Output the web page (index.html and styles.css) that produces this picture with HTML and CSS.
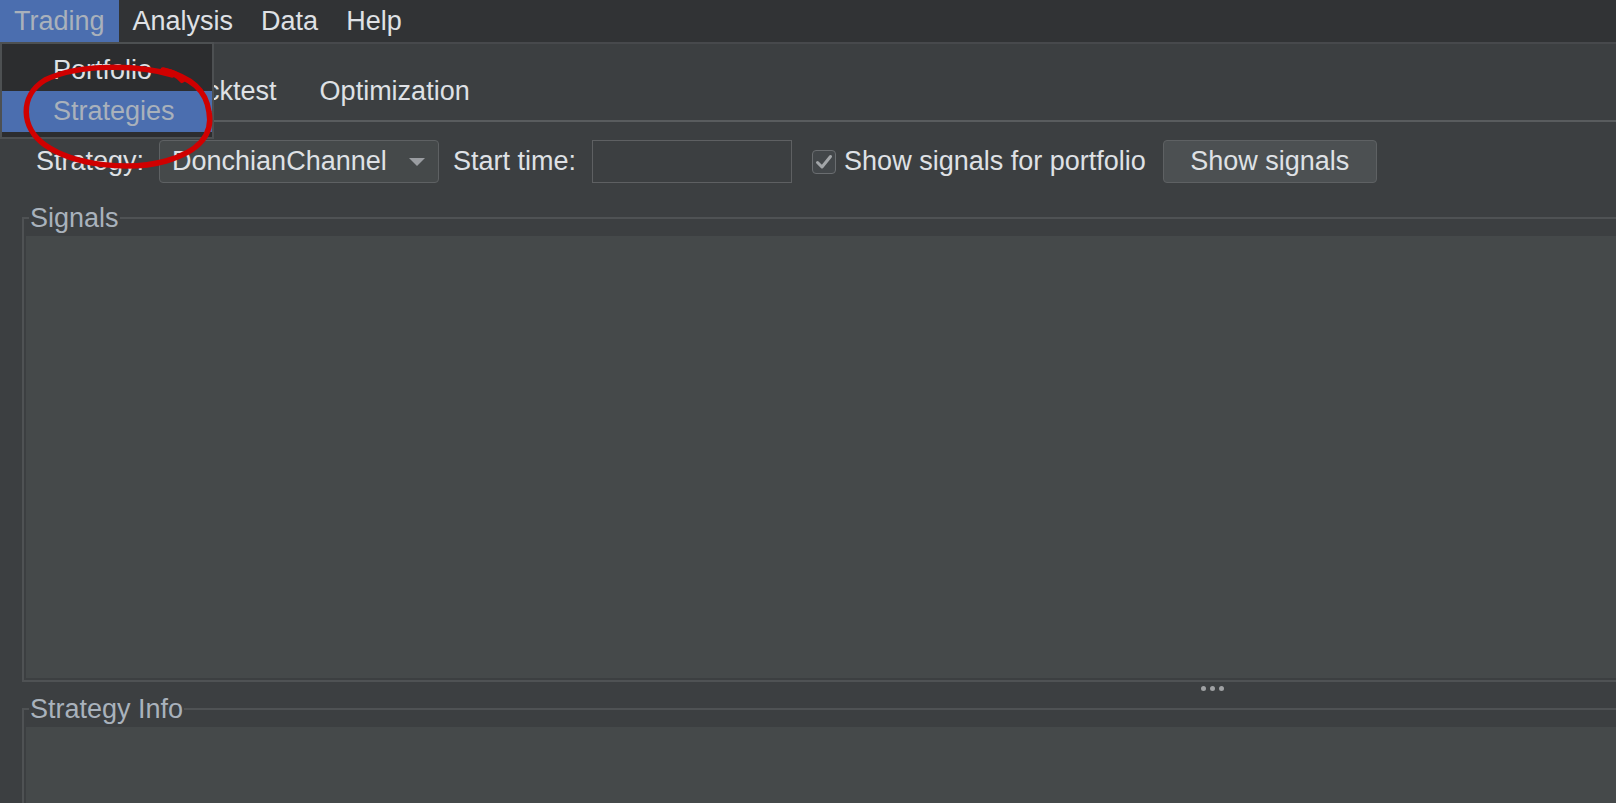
FILE: index.html
```html
<!DOCTYPE html>
<html>
<head>
<meta charset="utf-8">
<link rel="stylesheet" href="styles.css">
</head>
<body>
<div class="menubar">
  <div class="menu-item active">Trading</div>
  <div class="menu-item">Analysis</div>
  <div class="menu-item">Data</div>
  <div class="menu-item">Help</div>
</div>
<div class="tabs">
  <div class="tab tab-hidden">Signals</div>
  <div class="tab">Backtest</div>
  <div class="tab">Optimization</div>
</div>
<div class="toolbar">
  <span class="label">Strategy:</span>
  <div class="combo">
    <span class="combo-text">DonchianChannel</span>
    <span class="combo-arrow"></span>
  </div>
  <span class="label start-label">Start time:</span>
  <div class="textfield"></div>
  <div class="checkbox">
    <svg width="22" height="22" viewBox="0 0 22 22"><path d="M4.5 11.5 L9 16 L17.5 5.5" fill="none" stroke="#a2a5a8" stroke-width="3" stroke-linecap="round" stroke-linejoin="round"/></svg>
  </div>
  <span class="label check-label">Show signals for portfolio</span>
  <div class="button">Show signals</div>
</div>
<div class="split">
  <fieldset class="group">
    <legend class="group-title">Signals</legend>
    <div class="panel signals-panel"></div>
  </fieldset>
  <div class="divider"><span class="dot"></span><span class="dot"></span><span class="dot"></span></div>
  <fieldset class="group group-last">
    <legend class="group-title">Strategy Info</legend>
    <div class="panel info-panel"></div>
  </fieldset>
</div>

<div class="popup">
  <div class="popup-item">Portfolio</div>
  <div class="popup-item selected">Strategies</div>
</div>

<svg class="annotation" width="240" height="190" viewBox="0 0 240 190">
  <path d="M172 75 C140 65, 80 63, 45 80 C19 96, 21 128, 45 145 C75 166, 130 171, 166 161 C201 151, 213 133, 209 112 C206 90, 192 78, 163 70" fill="none" stroke="#d00000" stroke-width="5.5" stroke-linecap="round" stroke-linejoin="round"/>
  <path d="M165 71 C172 72, 178 75, 182 80" fill="none" stroke="#d00000" stroke-width="6" stroke-linecap="round"/>
</svg>
</body>
</html>
```
FILE: styles.css
```css
html, body {
  margin: 0;
  padding: 0;
}
body {
  width: 1616px;
  height: 803px;
  overflow: hidden;
  background: #3c3f41;
  font-family: "Liberation Sans", Arial, sans-serif;
  font-size: 27px;
  color: #dfe1e5;
  position: relative;
}

.menubar {
  height: 42px;
  background: #313335;
  display: flex;
  align-items: stretch;
}
.menu-item {
  padding: 0 14px;
  line-height: 42px;
  color: #dfe1e5;
}
.menu-item.active {
  background: #4b6eaf;
  color: #a9b1bb;
}

.tabs {
  height: 76px;
  border-top: 2px solid #47494c;
  border-bottom: 2px solid #595c5e;
  display: flex;
  align-items: flex-end;
  padding-left: 20px;
}
.tab {
  padding: 0 21.5px 14px;
  line-height: 30px;
  color: #dfe1e5;
}
.tab-hidden {
  visibility: hidden;
}

.toolbar {
  display: flex;
  align-items: center;
  padding: 18px 0 0 36px;
  height: 43px;
}
.label {
  white-space: nowrap;
  color: #dfe1e5;
}
.combo {
  margin-left: 15px;
  width: 280px;
  height: 43px;
  box-sizing: border-box;
  border: 1px solid #5e6163;
  border-radius: 4px;
  background: #45494a;
  display: flex;
  align-items: center;
  padding: 0 13px 0 12px;
}
.combo-text {
  flex: 1;
}
.combo-arrow {
  width: 0;
  height: 0;
  border-left: 8px solid transparent;
  border-right: 8px solid transparent;
  border-top: 8px solid #9a9da1;
}
.start-label {
  margin-left: 14px;
}
.textfield {
  margin-left: 16px;
  width: 200px;
  height: 43px;
  box-sizing: border-box;
  border: 1px solid #5e6062;
  background: #3c3f41;
}
.checkbox {
  margin-left: 20px;
  width: 24px;
  height: 24px;
  box-sizing: border-box;
  border: 1px solid #6a6d70;
  border-radius: 4px;
  background: #43474a;
  display: flex;
  align-items: center;
  justify-content: center;
}
.checkbox svg {
  display: block;
}
.check-label {
  margin-left: 8px;
}
.button {
  margin-left: 17px;
  width: 214px;
  height: 43px;
  box-sizing: border-box;
  border: 1px solid #5e6163;
  border-radius: 4px;
  background: #4c5052;
  display: flex;
  align-items: center;
  justify-content: center;
  color: #dfe1e5;
}

.split {
  margin: 20px 0 0 22px;
}
.group {
  margin: 0;
  padding: 3px 0 2px 2px;
  border: 2px solid #4f5254;
  border-right: none;
  min-width: 0;
}
.group-last {
  border-bottom: none;
  padding-bottom: 0;
}
.group-title {
  margin-left: 3px;
  padding: 0 1px;
  line-height: 30px;
  color: #a9b2bc;
}
.panel {
  background: #45494a;
}
.signals-panel {
  height: 442px;
}
.info-panel {
  height: 76px;
}
.divider {
  height: 12px;
  display: flex;
  align-items: center;
  gap: 4px;
  padding-left: 1179px;
}
.dot {
  width: 5px;
  height: 5px;
  border-radius: 50%;
  background: #9fa1a3;
}

.popup {
  position: absolute;
  left: 0;
  top: 42px;
  width: 214px;
  box-sizing: border-box;
  border: 2px solid #4d5052;
  background: #2c2d2f;
  padding: 6px 0 5px 0;
}
.popup-item {
  height: 41px;
  line-height: 41px;
  padding-left: 51px;
  color: #dfe1e5;
}
.popup-item.selected {
  background: #4b6eaf;
  color: #a9b1bb;
}

.annotation {
  position: absolute;
  left: 0;
  top: 0;
  pointer-events: none;
}
```
